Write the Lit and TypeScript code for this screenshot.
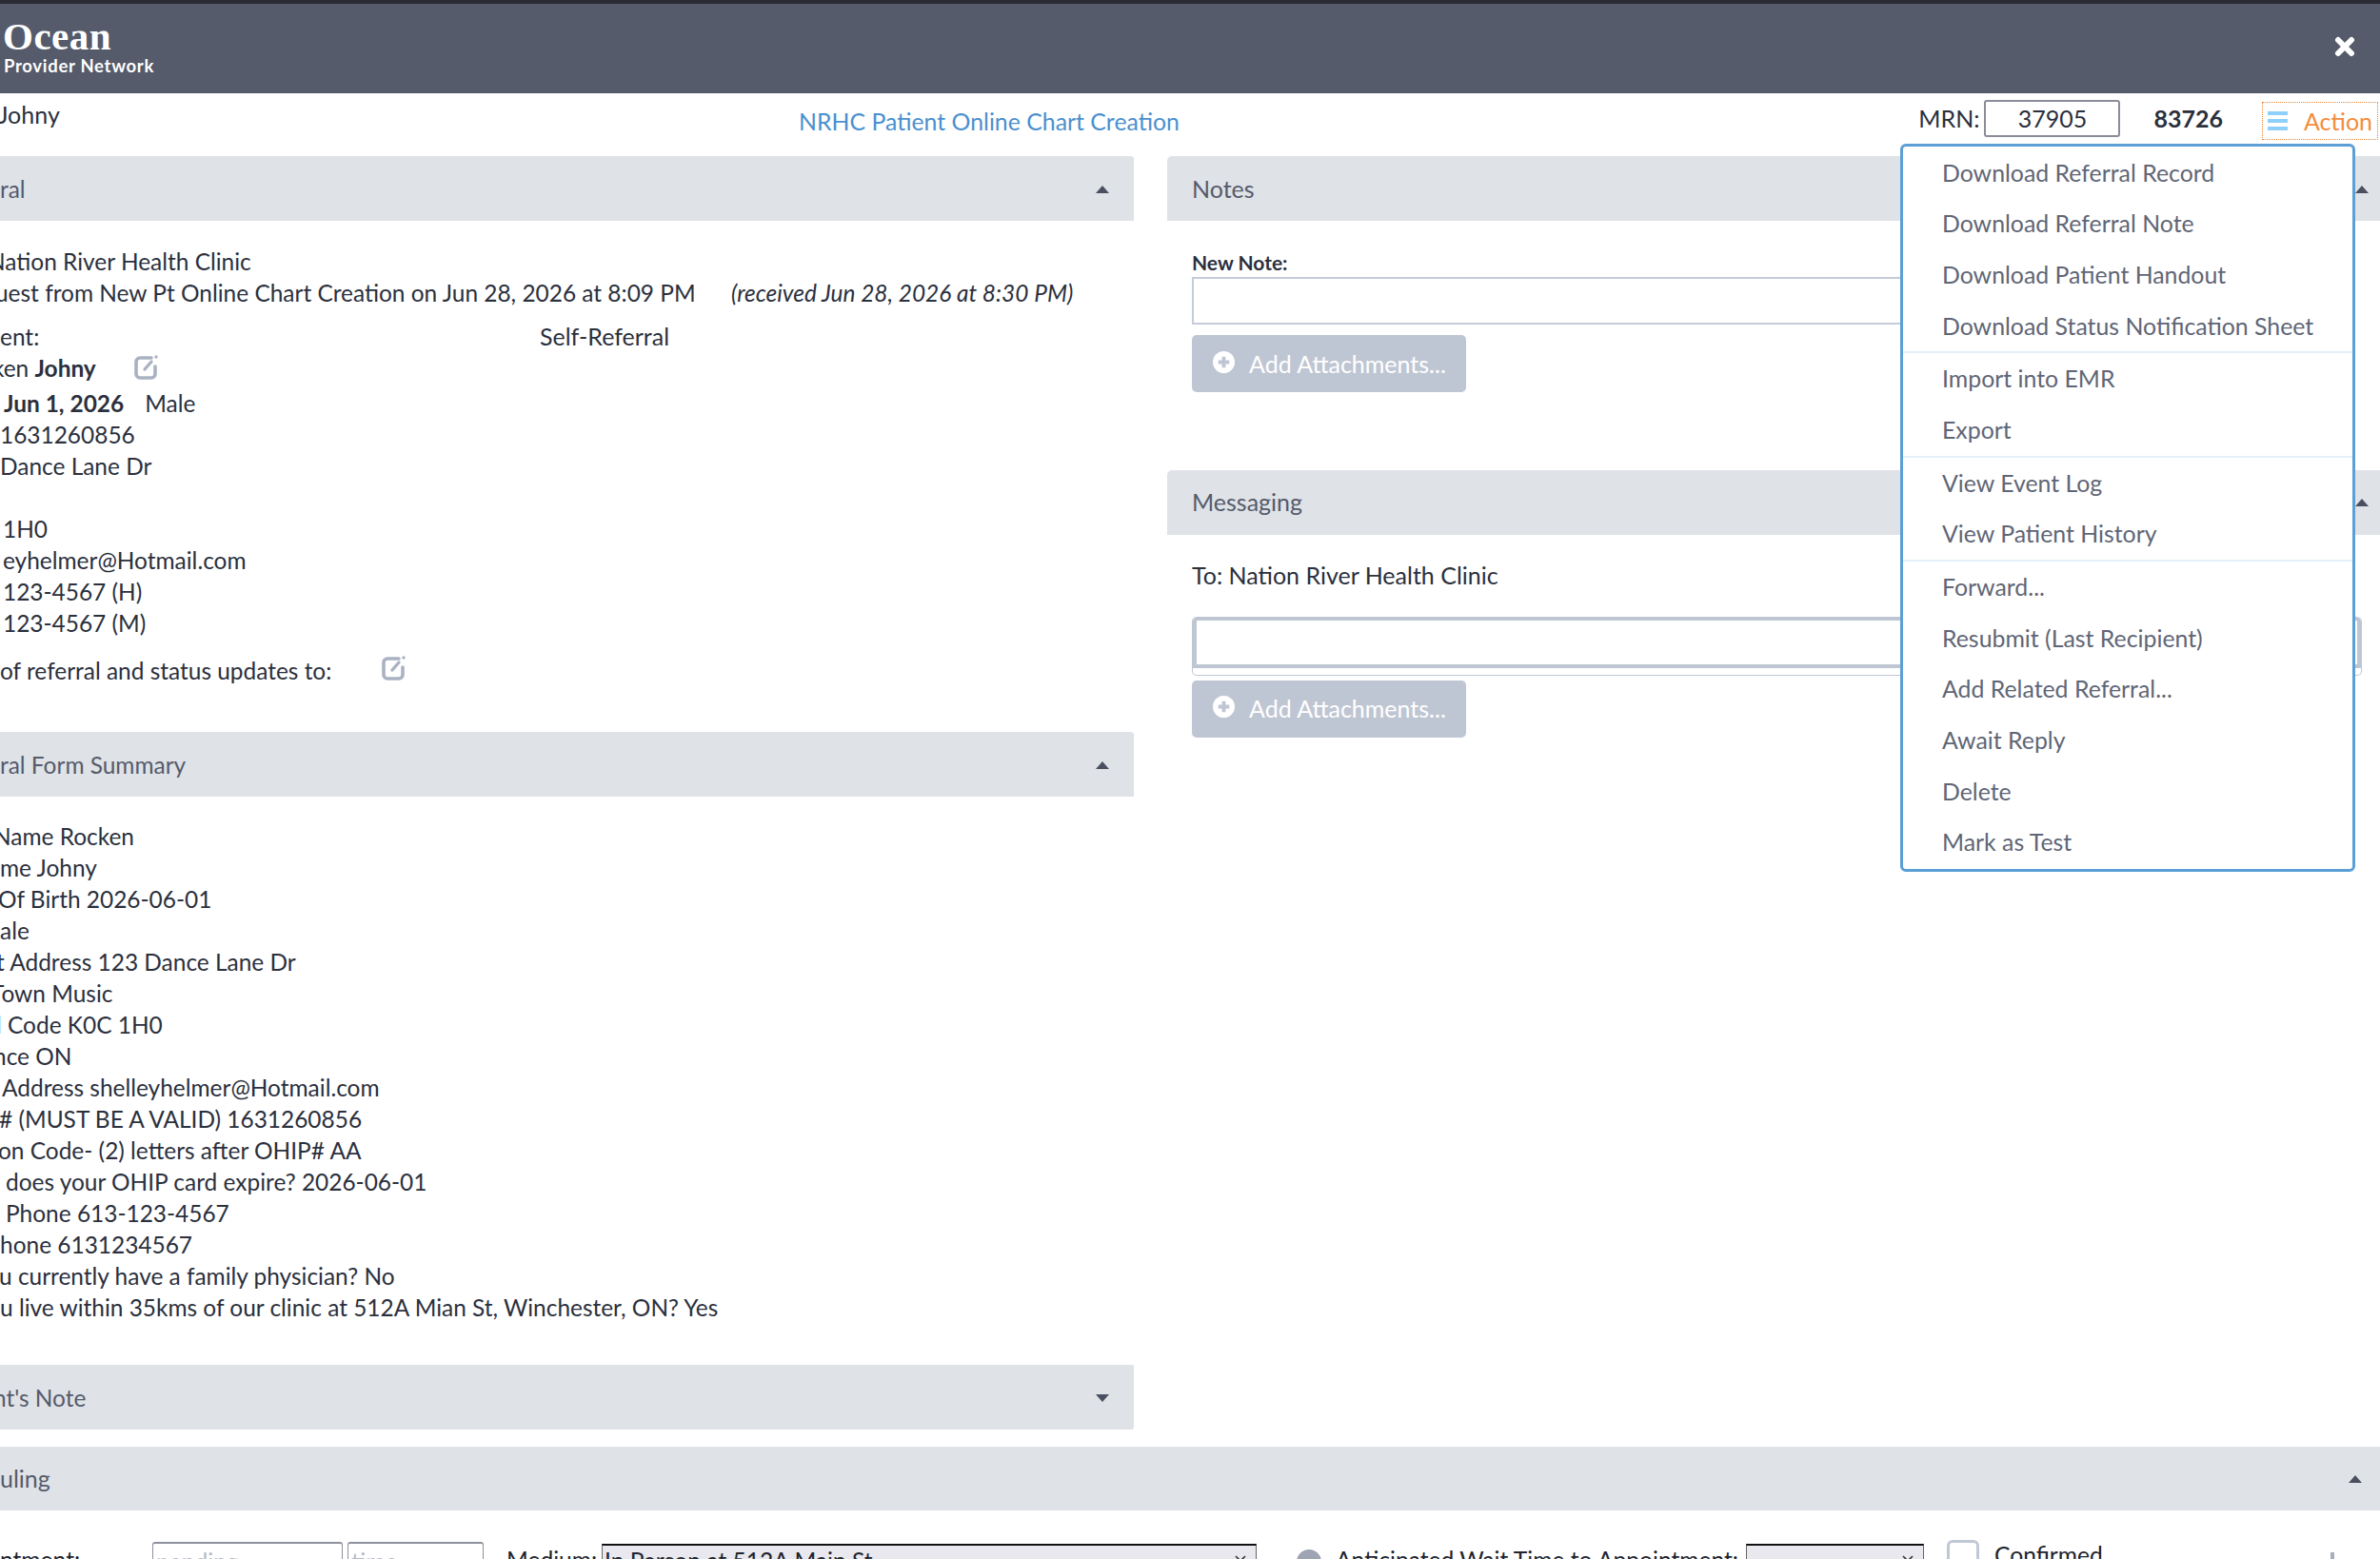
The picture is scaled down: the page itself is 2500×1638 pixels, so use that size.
import { LitElement, css, html, svg } from 'lit';
import { customElement } from 'lit/decorators.js';

const summaryRows: [string, number][] = [
  ['Name Rocken', -7],
  ['me Johny', 0],
  ['Of Birth 2026-06-01', -2],
  ['ale', 0],
  ['t Address 123 Dance Lane Dr', -4],
  ['Town Music', -10],
  ['l Code K0C 1H0', -4],
  ['nce ON', -7],
  ['Address shelleyhelmer@Hotmail.com', 2],
  ['# (MUST BE A VALID) 1631260856', -1],
  ['on Code- (2) letters after OHIP# AA', -2],
  ['does your OHIP card expire? 2026-06-01', 6],
  ['Phone 613-123-4567', 6],
  ['hone 6131234567', 0],
  ['u currently have a family physician? No', -1],
  ['u live within 35kms of our clinic at 512A Mian St, Winchester, ON? Yes', 0],
];

const menuGroups = [
  ['Download Referral Record', 'Download Referral Note', 'Download Patient Handout', 'Download Status Notification Sheet'],
  ['Import into EMR', 'Export'],
  ['View Event Log', 'View Patient History'],
  ['Forward...', 'Resubmit (Last Recipient)', 'Add Related Referral...', 'Await Reply', 'Delete', 'Mark as Test'],
];

const editIcon = svg`<path d="M19 4H7a4 4 0 0 0-4 4v13a4 4 0 0 0 4 4h12a4 4 0 0 0 4-4v-8" fill="none" stroke="#aab2c2" stroke-width="3.6" stroke-linecap="round"/><path d="M12 16l7-8" fill="none" stroke="#aab2c2" stroke-width="3.4" stroke-linecap="round"/><circle cx="24" cy="3" r="1.7" fill="#aab2c2"/>`;

const chevron = svg`<path d="M1 1l5 5 5-5" fill="none" stroke="#333" stroke-width="1.6"/>`;

@customElement('app-root')
export class AppRoot extends LitElement {
  static styles = css`
    :host {
      display: block;
      position: relative;
      height: 1638px;
      overflow: hidden;
      background: #fff;
      color: #2b303d;
      font: 25px/33px Lato, sans-serif;
    }
    .top {
      display: flex;
      align-items: center;
      justify-content: space-between;
      height: 94px;
      background: #555b6b;
      border-top: 4px solid #2b2b35;
      color: #fff;
      padding-right: 26px;
    }
    .logo {
      padding-left: 3px;
      margin-top: -5px;
    }
    .logo b {
      display: block;
      font: 700 41px/40px 'Liberation Serif', serif;
      letter-spacing: 0.5px;
    }
    .logo span {
      display: block;
      font: 700 18.5px/22px Lato, sans-serif;
      letter-spacing: 0.7px;
      padding-left: 1px;
    }
    .close {
      width: 22px;
      height: 22px;
      margin-top: -4px;
    }
    .info {
      position: relative;
      display: grid;
      grid-template-columns: 839px auto 1fr;
      height: 66px;
    }
    .who {
      padding-top: 6px;
      margin-left: -2px;
    }
    .title {
      color: #4a90cf;
      padding-top: 13px;
      font-size: 24.85px;
    }
    .ids {
      display: flex;
      align-items: flex-start;
      justify-content: flex-end;
      padding: 7px 2px 0 0;
    }
    .mrn-label {
      line-height: 39px;
      margin-right: 5px;
    }
    .mrn {
      box-sizing: border-box;
      width: 143px;
      height: 39px;
      border: 2px solid #8a8d98;
      border-radius: 3px;
      text-align: center;
      line-height: 35px;
      margin-right: 35px;
    }
    .num {
      font-weight: 700;
      line-height: 39px;
      margin-right: 41px;
    }
    .action {
      box-sizing: border-box;
      display: flex;
      align-items: center;
      width: 122px;
      height: 40px;
      margin-top: 2px;
      padding-left: 5px;
      border: 1px dotted #f0812a;
      color: #f28c3c;
    }
    .burger {
      display: flex;
      flex-direction: column;
      justify-content: space-between;
      width: 21px;
      height: 20px;
      margin-right: 17px;
    }
    .burger i {
      height: 4px;
      background: #8fd0fa;
    }
    .menu {
      position: absolute;
      left: 1996px;
      top: 151px;
      z-index: 2;
      box-sizing: border-box;
      width: 478px;
      height: 765px;
      padding-top: 0.5px;
      border: 3px solid #5b9fd6;
      border-radius: 6px;
      background: #fff;
      color: #5f6676;
      font-size: 24.85px;
    }
    .group {
      border-bottom: 2px solid #e3f0fa;
    }
    .group:last-child {
      border-bottom: 0;
    }
    .group div {
      height: 53.7px;
      line-height: 53.7px;
      padding-left: 41px;
    }
    .columns {
      display: grid;
      grid-template-columns: 1191px 1fr;
      column-gap: 35px;
    }
    .left {
      font-size: 24.45px;
    }
    .bar {
      display: flex;
      align-items: center;
      justify-content: space-between;
      height: 68px;
      background: #dfe2e7;
      color: #555b6b;
      border-radius: 5px 5px 0 0;
      padding: 0 26px;
    }
    .left .bar {
      padding: 0 26px 0 0;
      border-radius: 0 3px 0 0;
    }
    .left .bar.closed {
      border-radius: 0 0 3px 0;
    }
    .closed span {
      margin-left: -7px;
    }
    .caret {
      width: 0;
      height: 0;
      margin-top: 1px;
      border-left: 7px solid transparent;
      border-right: 7px solid transparent;
      border-bottom: 8px solid #4a5060;
    }
    .caret.down {
      border-bottom: 0;
      border-top: 8px solid #4a5060;
    }
    .right .caret {
      margin-right: -7px;
    }
    .referral {
      padding: 26px 0 48px;
    }
    .row {
      display: flex;
      height: 33px;
      white-space: nowrap;
    }
    .gap {
      margin-top: 13px;
    }
    .gap-sm {
      margin-top: 4px;
    }
    .gap-lg {
      margin-top: 17px;
    }
    .self {
      position: absolute;
      left: 567px;
      font-size: 25px;
    }
    .received {
      position: absolute;
      left: 768px;
      font-style: italic;
    }
    .male {
      margin-left: 22px;
    }
    .row b {
      font-weight: 700;
    }
    .edit {
      width: 27px;
      height: 27px;
    }
    .name .edit {
      margin: 2px 0 0 39px;
    }
    .updates .edit {
      margin: 0 0 0 52px;
    }
    .summary {
      padding: 25px 0 44px;
    }
    .note-body {
      box-sizing: border-box;
      height: 261.5px;
      padding: 31px 26px 0;
    }
    .label {
      font-weight: 700;
      font-size: 21px;
      line-height: 26px;
      color: #2b303d;
    }
    .note-input {
      box-sizing: border-box;
      width: 1000px;
      height: 50px;
      margin-top: 2px;
      border: 2px solid #c5cbd8;
    }
    .btn {
      display: flex;
      align-items: center;
      width: 288px;
      height: 60px;
      margin-top: 11px;
      padding-left: 22px;
      box-sizing: border-box;
      background: #bfc6d3;
      border-radius: 5px;
      color: #fff;
    }
    .btn svg {
      width: 23px;
      height: 23px;
      margin: -4px 15px 0 0;
    }
    .to {
      margin-top: 26px;
    }
    .msg-body {
      padding: 0 26px 0;
    }
    .msg {
      box-sizing: border-box;
      height: 62px;
      margin-top: 27px;
      border: 1px solid #bfc6d3;
      border-top: 0;
      border-radius: 5px;
      width: 1229px;
    }
    .msg div {
      box-sizing: border-box;
      height: 54px;
      border: 4px solid #bfc6d3;
      border-radius: 5px 5px 0 0;
    }
    .msg-btn {
      margin-top: 5px;
    }
    .sched {
      margin-top: 18px;
    }
    .sched.bar {
      border-radius: 0;
      height: 67px;
      padding: 0 19px 0 0;
    }
    .controls {
      display: flex;
      align-items: flex-start;
      padding-top: 33px;
      white-space: nowrap;
      font-size: 24.6px;
    }
    .controls > span {
      margin-top: 2px;
      color: #20242e;
    }
    .field {
      box-sizing: border-box;
      height: 40px;
      border: 1px solid #8d919c;
      border-top-width: 2px;
      border-radius: 3px 3px 0 0;
      color: #b3bac8;
      padding-left: 3px;
      line-height: 38px;
    }
    .select {
      box-sizing: border-box;
      display: flex;
      justify-content: space-between;
      height: 40px;
      margin-top: 2px;
      background: #e8e8ee;
      border: 1px solid #666;
      border-top: 2px solid #111;
      padding: 0 10px 0 2px;
      line-height: 31px;
      color: #20242e;
    }
    .select svg {
      width: 12px;
      height: 8px;
      margin-top: 10px;
    }
    .dot {
      width: 26px;
      height: 26px;
      margin-top: 8px;
      border-radius: 50%;
      background: #9ea4b3;
    }
    .check {
      box-sizing: border-box;
      width: 34px;
      height: 34px;
      margin-top: -2px;
      border: 3px solid #c0c8d6;
      border-radius: 6px;
    }
    .tick {
      width: 4px;
      height: 20px;
      margin: 11px 48px 0 auto;
      background: #a8aebb;
    }
  `;

  private addButton(extra = '') {
    return html`<div class="btn ${extra}">
      <svg viewBox="0 0 24 24"><circle cx="12" cy="12" r="12" fill="#fff" /><path d="M12 6v12M6 12h12" stroke="#bfc6d3" stroke-width="4" /></svg>
      Add Attachments...
    </div>`;
  }

  render() {
    return html`
      <div class="top">
        <div class="logo"><b>Ocean</b><span>Provider Network</span></div>
        <svg class="close" viewBox="0 0 22 22"><path d="M4 4l14 14M18 4L4 18" stroke="#fff" stroke-width="6" stroke-linecap="round" /></svg>
      </div>
      <div class="info">
        <div class="who">Johny</div>
        <div class="title">NRHC Patient Online Chart Creation</div>
        <div class="ids">
          <span class="mrn-label">MRN:</span>
          <div class="mrn">37905</div>
          <span class="num">83726</span>
          <div class="action"><span class="burger"><i></i><i></i><i></i></span>Action</div>
        </div>
      </div>
      <div class="menu">
        ${menuGroups.map((g) => html`<div class="group">${g.map((item) => html`<div>${item}</div>`)}</div>`)}
      </div>
      <div class="columns">
        <div class="left">
          <div class="bar"><span>ral</span><i class="caret"></i></div>
          <div class="referral">
            <div class="row" style="margin-left:-13px">Nation River Health Clinic</div>
            <div class="row" style="margin-left:-5px">uest from New Pt Online Chart Creation on Jun 28, 2026 at 8:09 PM<span class="received">(received Jun 28, 2026 at 8:30 PM)</span></div>
            <div class="row gap">ent:<span class="self">Self-Referral</span></div>
            <div class="row name" style="margin-left:-8px">ken&nbsp;<b>Johny</b><svg class="edit" viewBox="0 0 27 27">${editIcon}</svg></div>
            <div class="row gap-sm"><b style="margin-left:4px">Jun 1, 2026</b><span class="male">Male</span></div>
            <div class="row">1631260856</div>
            <div class="row">Dance Lane Dr</div>
            <div class="row"></div>
            <div class="row" style="margin-left:3px">1H0</div>
            <div class="row" style="margin-left:3px">eyhelmer@Hotmail.com</div>
            <div class="row" style="margin-left:3px">123-4567 (H)</div>
            <div class="row" style="margin-left:3px">123-4567 (M)</div>
            <div class="row gap-lg updates">of referral and status updates to:<svg class="edit" viewBox="0 0 27 27">${editIcon}</svg></div>
          </div>
          <div class="bar"><span>ral Form Summary</span><i class="caret"></i></div>
          <div class="summary">
            ${summaryRows.map(([text, x]) => html`<div class="row" style="margin-left:${x}px">${text}</div>`)}
          </div>
          <div class="bar closed"><span>nt's Note</span><i class="caret down"></i></div>
        </div>
        <div class="right">
          <div class="bar"><span>Notes</span><i class="caret"></i></div>
          <div class="note-body">
            <div class="label">New Note:</div>
            <div class="note-input"></div>
            ${this.addButton()}
          </div>
          <div class="bar"><span>Messaging</span><i class="caret"></i></div>
          <div class="msg-body">
            <div class="to">To: Nation River Health Clinic</div>
            <div class="msg"><div></div></div>
            ${this.addButton('msg-btn')}
          </div>
        </div>
      </div>
      <div class="bar sched"><span>uling</span><i class="caret"></i></div>
      <div class="controls">
        <span style="width:160px">ntment:</span>
        <div class="field" style="width:200px">pending</div>
        <div class="field" style="width:143px;margin-left:5px">time</div>
        <span style="width:100px;margin-left:24px">Medium:</span>
        <div class="select" style="width:688px">In Person at 512A Main St<svg viewBox="0 0 12 8">${chevron}</svg></div>
        <i class="dot" style="margin-left:42px"></i>
        <span style="width:431px;margin-left:15px">Anticipated Wait Time to Appointment:</span>
        <div class="select" style="width:187px"><svg viewBox="0 0 12 8" style="margin-left:auto">${chevron}</svg></div>
        <i class="check" style="margin-left:24px"></i>
        <span style="margin:-3px 0 0 16px">Confirmed</span>
        <i class="tick"></i>
      </div>
    `;
  }
}
